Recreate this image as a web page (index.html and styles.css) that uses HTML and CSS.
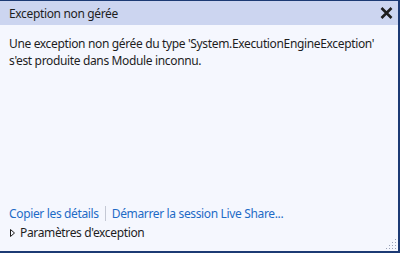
FILE: index.html
```html
<!DOCTYPE html>
<html lang="fr">
<head>
    <meta charset="UTF-8">
    <title>Exception non gérée</title>
    <link rel="stylesheet" href="styles.css">
</head>
<body>
    <div class="popup">
        <div class="header">
            <span class="title">Exception non gérée</span>
            <span class="close">
                <svg width="13" height="12" viewBox="0 0 13 12">
                    <path d="M1.5 1 L11.5 11 M11.5 1 L1.5 11" stroke="#1e1e1e" stroke-width="2.6"/>
                </svg>
            </span>
        </div>
        <div class="content">
            <p class="message">Une exception non gérée du type 'System.ExecutionEngineException' s'est produite dans Module inconnu.</p>
        </div>
        <div class="links">
            <a href="#">Copier les détails</a>
            <span class="sep"></span>
            <a href="#">Démarrer la session Live Share...</a>
        </div>
        <div class="settings">
            <svg width="5" height="8" viewBox="0 0 5 8">
                <path d="M0.5 0.5 L4.5 4 L0.5 7.5 Z" fill="none" stroke="#1e1e1e" stroke-width="1"/>
            </svg>
            <span>Paramètres d'exception</span>
        </div>
        <div class="grip">
            <svg width="12" height="12" viewBox="0 0 12 12" fill="#9aa3b8">
                <rect x="10" y="1" width="1" height="1"/>
                <rect x="7" y="4" width="1" height="1"/>
                <rect x="10" y="4" width="1" height="1"/>
                <rect x="4" y="7" width="1" height="1"/>
                <rect x="7" y="7" width="1" height="1"/>
                <rect x="10" y="7" width="1" height="1"/>
                <rect x="1" y="10" width="1" height="1"/>
                <rect x="4" y="10" width="1" height="1"/>
                <rect x="7" y="10" width="1" height="1"/>
                <rect x="10" y="10" width="1" height="1"/>
            </svg>
        </div>
    </div>
</body>
</html>
```

FILE: styles.css
```css
body {
    margin: 0;
    padding: 0;
    font-family: "Noto Sans", "Open Sans", sans-serif;
    font-size: 12px;
    letter-spacing: -0.35px;
    color: #1e1e1e;
    background-color: #f5f7fe;
}

.popup {
    position: relative;
    width: 398px;
    height: 250px;
    border-top: 1px solid #1c3a74;
    border-right: 2px solid #1c3a74;
    border-bottom: 2px solid #1c3a74;
    background-color: #f5f7fe;
    display: flex;
    flex-direction: column;
}

.header {
    height: 24px;
    background-color: #ccd5f0;
    display: flex;
    align-items: center;
    justify-content: space-between;
    padding: 0 5px 0 9px;
}

.close {
    display: flex;
}

.content {
    flex: 1;
    padding: 10px 9px 0 9px;
}

.message {
    margin: 0;
    line-height: 17px;
    width: 385px;
}

.links {
    display: flex;
    align-items: center;
    padding: 0 9px;
    height: 18px;
}

.links a {
    color: #1e6bc6;
    text-decoration: none;
}

.sep {
    width: 1px;
    height: 15px;
    background-color: #c4c8d4;
    margin: 0 6px;
}

.settings {
    display: flex;
    align-items: center;
    gap: 5px;
    padding: 0 10px;
    height: 21px;
    margin-bottom: 8px;
}

.grip {
    position: absolute;
    right: 1px;
    bottom: 1px;
    display: flex;
}
```
